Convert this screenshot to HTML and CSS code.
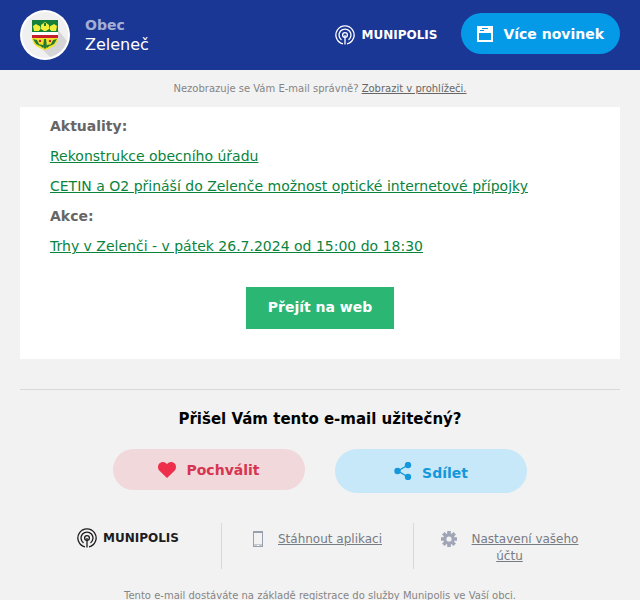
FILE: index.html
```html
<!DOCTYPE html>
<html lang="cs">
<head>
<meta charset="utf-8">
<meta name="viewport" content="width=device-width, initial-scale=1">
<title>Obec Zeleneč</title>
<link rel="stylesheet" href="styles.css">
</head>
<body>
<svg class="symbols" aria-hidden="true">
  <symbol id="signal" viewBox="0 0 20 20">
    <g fill="none" stroke="currentColor" stroke-width="1.300">
      <path d="M8 18.900A9.100 9.100 0 1 1 12 18.900"/>
      <path d="M6.500 14.900A6 6 0 1 1 13.500 14.900"/>
      <circle cx="10" cy="10" r="2.400"/>
      <path d="M10 10v9.500"/>
    </g>
  </symbol>
</svg>

<header class="header">
  <div class="sender">
    <svg class="crest" viewBox="0 0 50 50" aria-hidden="true">
      <circle cx="25" cy="25" r="25" fill="#fff"/>
      <circle cx="25" cy="25" r="23" fill="#f0f0f0"/>
      <path d="M38 20L47 31A23 23 0 0 1 30 47L22 39Z" fill="#d5d5d7"/>
      <path d="M12 10h26v17c0 7-5 11-13 13-8-2-13-6-13-13z" fill="#f5e12c"/>
      <path d="M12 10h26v12H12z" fill="#16803b"/>
      <g fill="#f2ee3c">
        <path d="M13 16l3-2 3 2v5h-5zM31 16l3-2 3 2-1 5h-5zM21 15l4-3 4 3v4l-3 2h-2l-3-2z"/>
        <circle cx="18" cy="18" r="2.500"/><circle cx="32" cy="18" r="2.500"/>
      </g>
      <path d="M24 13h2v3h-2z" fill="#16803b"/>
      <path d="M12 22h26v3H12z" fill="#fff"/>
      <path d="M12 25h26v3H12z" fill="#c5202c"/>
      <path d="M13 29l4 1 3 6-4-2zM37 29l-4 1-3 6 4-2zM18 34l5 1v3zM32 34l-5 1v3zM24 29h2l1 8-2 2-2-2z" fill="#237a32"/>
      <circle cx="20" cy="31" r="1.200" fill="#c5202c"/><circle cx="30" cy="31" r="1.200" fill="#c5202c"/>
    </svg>
    <div>
      <div class="sender-kind">Obec</div>
      <div class="sender-name">Zeleneč</div>
    </div>
  </div>
  <div class="header-actions">
    <div class="brand"><svg class="brand-mark" aria-hidden="true"><use href="#signal"/></svg>MUNIPOLIS</div>
    <a class="pill pill-news" href="#">
      <svg class="icon-news" viewBox="0 0 16 16" aria-hidden="true"><path fill="#fff" fill-rule="evenodd" d="M0 0h16v16H0zM2 7v7h12V7zM3 4v1h4V4zM5 2v1h6V2z"/></svg>
      Více novinek
    </a>
  </div>
</header>

<p class="preheader">Nezobrazuje se Vám E-mail správně? <a href="#">Zobrazit v prohlížeči.</a></p>

<main class="content">
  <section class="card">
    <h2>Aktuality:</h2>
    <p><a href="#">Rekonstrukce obecního úřadu</a></p>
    <p><a href="#">CETIN a O2 přináší do Zelenče možnost optické internetové přípojky</a></p>
    <h2>Akce:</h2>
    <p><a href="#">Trhy v Zelenči - v pátek 26.7.2024 od 15:00 do 18:30</a></p>
    <a class="web-button" href="#">Přejít na web</a>
  </section>

  <section class="feedback">
    <h3>Přišel Vám tento e-mail užitečný?</h3>
    <div class="feedback-actions">
      <a class="pill pill-like" href="#">
        <svg class="icon-like" viewBox="0 0 18 16" aria-hidden="true"><path fill="#ee2f4b" d="M9 16L1.500 8.800C-.5 6.500-.4 3.500 1.300 1.600 3.400-.6 7-.5 9 2.200 11-.5 14.600-.6 16.700 1.600c1.700 1.900 1.800 4.900-.2 7.200z"/></svg>
        Pochválit
      </a>
      <a class="pill pill-share" href="#">
        <svg class="icon-share" viewBox="0 0 18 18" aria-hidden="true"><path d="M14 3L4 9l10 6" fill="none" stroke="#1597dc" stroke-width="1.400"/><g fill="#1597dc"><circle cx="14" cy="3" r="3.200"/><circle cx="3.500" cy="9" r="3.200"/><circle cx="14" cy="15" r="3.200"/></g></svg>
        Sdílet
      </a>
    </div>
  </section>
</main>

<footer class="footer">
  <div class="footer-columns">
    <div class="footer-cell footer-brand"><div class="brand brand-dark"><svg class="brand-mark" aria-hidden="true"><use href="#signal"/></svg>MUNIPOLIS</div></div>
    <div class="footer-cell">
      <svg class="icon-phone" viewBox="0 0 10 16" aria-hidden="true"><rect x=".5" y=".5" width="9" height="15" fill="#f2f2f2" stroke="#9a9fae"/><path d="M1 1.500h8M1 14h8" stroke="#9a9fae"/><path d="M4 14.500h2" stroke="#fff"/></svg>
      <a href="#">Stáhnout aplikaci</a>
    </div>
    <div class="footer-cell footer-settings">
      <svg class="icon-gear" viewBox="0 0 16 16" aria-hidden="true"><g stroke="#a1a6b6" stroke-width="3.600"><path d="M8 0v16M0 8h16M2.300 2.300l11.400 11.400M13.700 2.300L2.300 13.700"/></g><circle cx="8" cy="8" r="5.800" fill="#a1a6b6"/><circle cx="8" cy="8" r="2.600" fill="#f2f2f2"/></svg><a href="#">Nastavení vašeho účtu</a>
    </div>
  </div>
  <p class="legal">Tento e-mail dostáváte na základě registrace do služby Munipolis ve Vaší obci.</p>
</footer>
</body>
</html>
```
FILE: styles.css
```css
* { box-sizing: border-box; }

body {
  margin: 0;
  background: #f2f2f2;
  font-family: "DejaVu Sans", Verdana, sans-serif;
  font-size: 14px;
  line-height: 20px;
  color: #666;
}

h2, h3, p { margin: 0; }

svg { flex: none; }

.symbols {
  position: absolute;
  width: 0;
  height: 0;
}

.header {
  display: flex;
  align-items: center;
  justify-content: space-between;
  padding: 10px 20px;
  background: #1b3796;
  color: #fff;
}

.sender {
  display: flex;
  align-items: center;
  gap: 15px;
}

.crest { width: 50px; height: 50px; }

.sender-kind { font-weight: bold; color: #a4afd5; }

.sender-name { font-size: 16px; }

.header-actions {
  display: flex;
  align-items: center;
  gap: 24px;
}

.brand {
  display: flex;
  align-items: center;
  gap: 6px;
  font-size: 12px;
  font-weight: bold;
}

.brand-mark { width: 20px; height: 20px; }

.brand-dark { color: #1d1d1f; }

.pill {
  display: flex;
  align-items: center;
  justify-content: center;
  gap: 10px;
  border-radius: 22px;
  font-weight: bold;
  text-decoration: none;
}

.pill-news {
  margin-bottom: 4px;
  padding: 11px 16px 10px;
  background: #059ae8;
  color: #fff;
}

.icon-news { width: 16px; height: 16px; }

.preheader {
  padding: 9px 20px 8px;
  font-size: 10px;
  text-align: center;
  color: #858585;
}

.preheader a { color: #666; }

.content { padding: 0 20px; }

.card {
  display: flex;
  flex-direction: column;
  gap: 10px;
  padding: 9px 30px 30px;
  background: #fff;
}

.card h2 { font-size: 14px; }

.card p a { color: #0a843d; }

.web-button {
  align-self: center;
  margin-top: 21px;
  padding: 10px 22px 12px;
  background: #2bb673;
  color: #fff;
  font-weight: bold;
  text-decoration: none;
}

.feedback {
  margin-top: 30px;
  padding-top: 19px;
  border-top: 1px solid #d9d9d9;
}

.feedback h3 {
  font-size: 15px;
  text-align: center;
  color: #000;
}

.feedback-actions {
  display: grid;
  grid-template-columns: 192px 192px;
  justify-content: center;
  align-items: start;
  gap: 30px;
  margin-top: 20px;
}

.pill-like {
  padding: 11px 10px 10px;
  background: #f1d8da;
  color: #d63450;
}

.icon-like { width: 18px; height: 16px; }

.pill-share {
  align-items: flex-start;
  padding: 14px 10px 10px;
  background: #c7e8f8;
  color: #1597dc;
}

.icon-share { width: 18px; height: 18px; margin-top: -1px; }

.footer { padding: 30px 0 10px; color: #858585; }

.footer-columns {
  display: grid;
  grid-template-columns: 1fr 1fr 1fr;
  padding: 0 35px 0 29px;
}

.footer-cell {
  display: flex;
  align-items: flex-start;
  justify-content: center;
  gap: 15px;
  min-height: 46px;
  padding: 8px 26px 4px;
  font-size: 12px;
  line-height: 17px;
  text-align: center;
}

.footer-cell + .footer-cell { border-left: 1px solid #d9d9d9; }

.footer-brand { padding: 5px 22px 4px 28px; }

.footer-settings { display: block; padding: 8px 20px 4px; }

.footer-cell a { color: #777b84; }

.icon-phone { width: 10px; height: 16px; }

.icon-gear {
  width: 16px;
  height: 16px;
  margin-right: 15px;
  vertical-align: top;
}

.legal {
  margin-top: 17px;
  padding: 0 20px;
  font-size: 10px;
  text-align: center;
}
```
